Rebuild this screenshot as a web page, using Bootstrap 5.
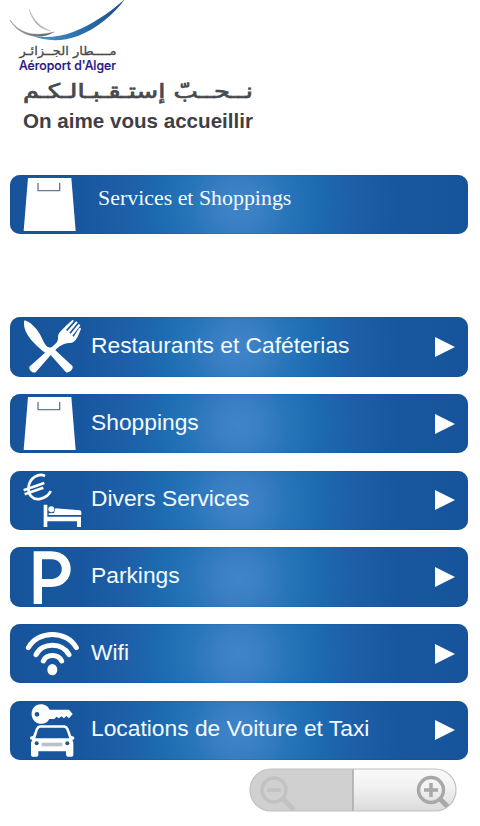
<!DOCTYPE html>
<html lang="fr">
  <head>
    <meta charset="UTF-8" />
    <meta name="viewport" content="width=device-width, initial-scale=1.0" />
    <title>Aéroport d'Alger - Services et Shoppings</title>
    <link
      rel="stylesheet"
      href="https://cdn.jsdelivr.net/npm/bootstrap@5.3.0/dist/css/bootstrap.min.css"
    />
    <style>
      body {
        font-family: "Liberation Sans", Arial, sans-serif;
        background: #fff;
      }
      .page {
        width: 480px;
        height: 826px;
        padding: 0 12px 0 10px;
      }
      .logo {
        height: 175px;
        margin-left: -10px;
      }
      .bar {
        height: 59.3px;
        border-radius: 10px;
        color: #f4fbff;
        background: radial-gradient(circle 235px at 50% 52%, #4084c8 0, #3a7fc4 9%, #2472b7 24%, #1c69b0 36%, #1e5fa9 48%, #18579f 68%, #16539b 100%);
        box-shadow: inset 0 0 1px #0d3d7c;
      }
      .bar-title {
        font-family: "Liberation Serif", "Times New Roman", serif;
        font-size: 21.9px;
        margin: -13px 0 0 7px;
      }
      .bar-label {
        font-size: 22.8px;
        margin-top: -4px;
      }
      .menu {
        margin-top: 83px;
        gap: 17.4px;
      }
      .icon {
        width: 80px;
        height: 59px;
        margin-right: 1px;
        fill: #fff;
      }
      .arrow {
        width: 20px;
        height: 20px;
        fill: #fff;
        margin-right: 13.5px;
      }
      .zoom-control {
        width: 208px;
        height: 44px;
        margin: 8px 11px 0 0;
      }
    </style>
  </head>
  <body>
    <div class="page d-flex flex-column overflow-hidden">
      <header class="logo flex-shrink-0">
        <svg class="d-block" width="270" height="140" viewBox="0 0 270 140">
          <defs>
            <linearGradient id="swoosh" x1="0" x2="1">
              <stop offset="0" stop-color="#4a9ad0" />
              <stop offset=".5" stop-color="#2b70ad" />
              <stop offset="1" stop-color="#1c4e85" />
            </linearGradient>
            <linearGradient id="wing" x1="0" x2="1">
              <stop offset="0" stop-color="#aaa" />
              <stop offset="1" stop-color="#555" />
            </linearGradient>
          </defs>
          <path d="M10 20C20 34 34 37 54 32C44 38 33 37 26 34C19 31 14 27 10 20Z" fill="url(#wing)" stroke="#777" stroke-width=".4" />
          <path d="M29 9C34 21 40 27 51 31C38 29 32 20 29 9Z" fill="#aaa" stroke="#bbb" stroke-width=".4" />
          <path d="M33 36C44 41 62 42 78 36C98 28 114 14 125 -1C108 14 91 25 73 32C60 37 46 38 33 36Z" fill="url(#swoosh)" />
          <g direction="rtl" font-family="'DejaVu Sans', sans-serif" fill="#48494d" stroke="#48494d">
            <text x="116.500" y="55" font-size="12" stroke-width=".3" textLength="97" lengthAdjust="spacingAndGlyphs">مــــطار الجــزائـر</text>
            <text x="253" y="98" font-size="20" stroke-width=".7" textLength="230" lengthAdjust="spacingAndGlyphs">نــحــبّ إستـقـبـالـكـم</text>
          </g>
          <text x="19" y="70" font-family="Inter, sans-serif" font-size="12.500" font-weight="500" fill="#251580" stroke="#251580" stroke-width=".2" textLength="97" lengthAdjust="spacingAndGlyphs">Aéroport d'Alger</text>
          <text x="23" y="128" font-size="21" font-weight="700" fill="#3f4044" textLength="230" lengthAdjust="spacingAndGlyphs">On aime vous accueillir</text>
        </svg>
      </header>

      <div class="bar d-flex align-items-center flex-shrink-0">
        <svg class="icon" viewBox="0 0 240 177">
          <path d="M54 9H184L197 168H41Z" />
          <path d="M84 24V47H149V24" fill="none" stroke="#64789a" stroke-width="4" />
        </svg>
        <h1 class="bar-title">Services et Shoppings</h1>
      </div>

      <nav class="menu d-flex flex-column">
        <a href="#" class="bar d-flex align-items-center text-decoration-none">
          <svg class="icon" viewBox="0 0 240 177">
            <!-- knife -->
            <path d="M43 10C60 14 79 33 90 52C97 65 103 82 113 90L130 94L188 148C190 158 177 169 168 166L116 107L108 110C86 92 34 52 43 10Z" />
            <!-- fork -->
            <path d="M187 9C191 9 192 12 190 14L168 39L172 42L197 14C201 12 204 15 202 18L178 47L182 50L205 22C209 20 212 24 210 27L187 56L191 59L207 34C211 30 214 33 212 38C205 53 198 79 178 78C159 78 146 90 135 100L77 166C69 170 56 159 58 149L117 97C134 83 145 77 144 61C143 46 158 38 168 26Z" />
          </svg>
          <span class="bar-label flex-grow-1">Restaurants et Caféterias</span>
          <svg class="arrow" viewBox="0 0 20 20"><path d="M0 0L20 10L0 20Z" /></svg>
        </a>
        <a href="#" class="bar d-flex align-items-center text-decoration-none">
          <svg class="icon" viewBox="0 0 240 177">
            <path d="M54 9H184L197 168H41Z" />
            <path d="M84 24V47H149V24" fill="none" stroke="#64789a" stroke-width="4" />
          </svg>
          <span class="bar-label flex-grow-1">Shoppings</span>
          <svg class="arrow" viewBox="0 0 20 20"><path d="M0 0L20 10L0 20Z" /></svg>
        </a>
        <a href="#" class="bar d-flex align-items-center text-decoration-none">
          <svg class="icon" viewBox="0 0 240 177">
            <!-- euro -->
            <path d="M105 15C87 5 60 20 56 46C52 72 70 89 92 83C108 79 118 70 122 60M41 58L103 36M44 70L100 50" fill="none" stroke="#fff" stroke-width="8" />
            <!-- bed -->
            <path d="M101 101H112V137H213V168H201V151H112V168H101Z" />
            <circle cx="124" cy="115" r="9" />
            <path d="M136 112L210 118Q214 119 214 124V132H116V127L132 126Z" />
          </svg>
          <span class="bar-label flex-grow-1">Divers Services</span>
          <svg class="arrow" viewBox="0 0 20 20"><path d="M0 0L20 10L0 20Z" /></svg>
        </a>
        <a href="#" class="bar d-flex align-items-center text-decoration-none">
          <svg class="icon" viewBox="0 0 240 177">
            <path fill-rule="evenodd" d="M71 10H123C202 10 202 117 123 117H96V168H71ZM96 34V93H124C166 93 166 34 124 34Z" />
          </svg>
          <span class="bar-label flex-grow-1">Parkings</span>
          <svg class="arrow" viewBox="0 0 20 20"><path d="M0 0L20 10L0 20Z" /></svg>
        </a>
        <a href="#" class="bar d-flex align-items-center text-decoration-none">
          <svg class="icon" viewBox="0 0 240 177">
            <g fill="none" stroke="#fff" stroke-width="15" stroke-linecap="round">
              <path d="M55 71C84 18 170 18 199 71" />
              <path d="M78 92C97 54 157 54 177 92" />
              <path d="M100 111C109 89 145 89 155 111" />
            </g>
            <ellipse cx="127" cy="137" rx="15" ry="17" />
          </svg>
          <span class="bar-label flex-grow-1">Wifi</span>
          <svg class="arrow" viewBox="0 0 20 20"><path d="M0 0L20 10L0 20Z" /></svg>
        </a>
        <a href="#" class="bar d-flex align-items-center text-decoration-none">
          <svg class="icon" viewBox="0 0 240 177">
            <!-- key -->
            <path fill-rule="evenodd" d="M93 10C107 10 114 17 119 26H177L188 39L177 52L169 45L162 52L154 46L147 52L139 47L133 54L118 54C112 66 102 69 90 68C56 64 56 11 93 10ZM81 33A7 7 0 1 0 81 47A7 7 0 1 0 81 33Z" />
            <!-- car -->
            <path fill-rule="evenodd" d="M89 73H164Q172 74 176 83L184 105L192 107L193 114L187 117Q191 122 190 130V162Q190 167 185 167H174Q169 167 168 162V151H85V162Q85 167 80 167H68Q63 167 63 162V130Q62 122 67 117L60 114L61 107L69 105L78 82Q81 74 89 73ZM91 80Q87 80 84 86L76 112H178L169 86Q166 80 162 80Z" />
            <g fill="#285787">
              <circle cx="80" cy="127" r="6" />
              <circle cx="172" cy="127" r="6" />
            </g>
            <path d="M95 125H157V136H95Z" fill="#b9c1d0" />
          </svg>
          <span class="bar-label flex-grow-1">Locations de Voiture et Taxi</span>
          <svg class="arrow" viewBox="0 0 20 20"><path d="M0 0L20 10L0 20Z" /></svg>
        </a>
      </nav>

      <svg class="zoom-control align-self-end flex-shrink-0" viewBox="0 0 208 44">
        <defs>
          <linearGradient id="zoomOn" x2="0" y2="1">
            <stop offset="0" stop-color="#fafafa" />
            <stop offset=".45" stop-color="#f1f1f1" />
            <stop offset="1" stop-color="#dadada" />
          </linearGradient>
          <clipPath id="pill"><rect x="1" y="1" width="206" height="42" rx="21" /></clipPath>
        </defs>
        <g clip-path="url(#pill)">
          <rect width="208" height="44" fill="url(#zoomOn)" />
          <rect width="104" height="44" fill="#d0d0d0" />
          <path d="M104 0V44" stroke="#aaa" stroke-width="1.500" />
          <g fill="none" stroke="#c2c2c2" stroke-width="3.500">
            <circle cx="25" cy="22" r="12" />
            <path d="M18 22H32" />
            <path d="M34 31L45 42" stroke-width="5" />
          </g>
          <g fill="none" stroke="#a8a8a8" stroke-width="3.500">
            <circle cx="182" cy="22" r="12.500" />
            <path d="M175 22H189M182 15V29" />
            <path d="M191 31L200 40" stroke-width="5" />
          </g>
        </g>
        <rect x="1" y="1" width="206" height="42" rx="21" fill="none" stroke="#c0c0c0" stroke-width="1.200" />
      </svg>
    </div>
    <script src="https://cdn.jsdelivr.net/npm/bootstrap@5.3.0/dist/js/bootstrap.bundle.min.js"></script>
  </body>
</html>
